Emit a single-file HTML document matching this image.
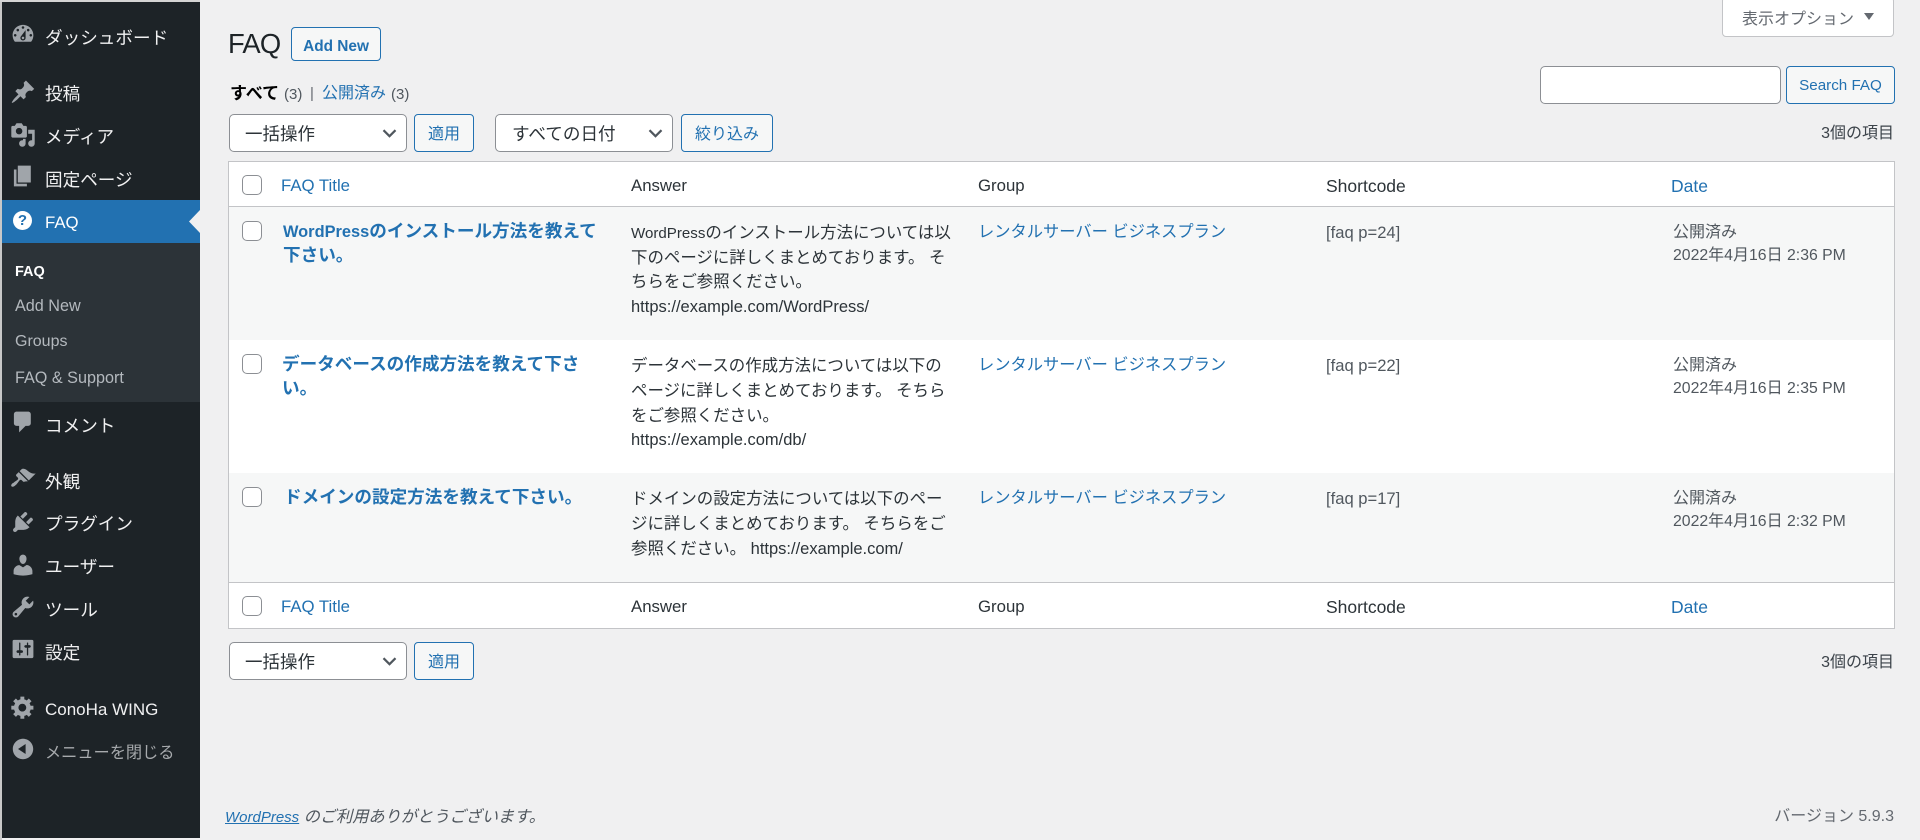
<!DOCTYPE html>
<html lang="ja"><head><meta charset="utf-8"><title>FAQ</title>
<style>
html,body{margin:0;padding:0;width:1920px;height:840px;overflow:hidden;background:#f0f0f1}
body{position:relative;font-family:"Liberation Sans","Noto Sans CJK JP",sans-serif;color:#3c434a}
.t{position:absolute;white-space:nowrap;line-height:24px;height:24px}
.m{font-size:17.6px;color:#f0f0f1;left:45px}
.s{font-size:16px;color:#b4b9be;left:15px}
svg.i{position:absolute;width:26px;height:26px;left:9.5px;fill:#a0a5aa}
.box{position:absolute;box-sizing:border-box}
.sel{background:#fff;border:1px solid #8c8f94;border-radius:5px;height:38px}
.btn{background:#f6f7f7;border:1px solid #2271b1;border-radius:4px;height:38px;color:#2271b1;font-size:16px;text-align:center;line-height:39px}
.cb{width:20px;height:20px;left:242px;background:#fff;border:1px solid #8c8f94;border-radius:5px}
.chev{position:absolute;width:15px;height:9px;fill:none;stroke:#50575e;stroke-width:2.2}
.l{color:#2271b1}
.h{font-size:16.8px;color:#2c3338}
.tt{font-size:17.6px;font-weight:bold;color:#2271b1;left:283px}
.tt i{font-style:normal;font-size:16.4px}
.a{font-size:16.45px;left:631px;color:#2c3338}
.a i{font-style:normal;font-size:16.5px}
.a i.w{font-size:15.1px}
.g{font-size:16.25px;color:#2271b1;left:978px}
.c{font-size:16.6px;color:#50575e;left:1326px}
.d{font-size:16px;color:#50575e;left:1673px}
.d i{font-style:normal;font-size:15.8px}
</style></head><body>

<div class="box" style="left:2px;top:2px;width:198px;height:836px;background:#1d2327"></div>
<div class="box" style="left:2px;top:200px;width:198px;height:43px;background:#2271b1"></div>
<div class="box" style="left:2px;top:243px;width:198px;height:159px;background:#2c3338"></div>
<div class="box" style="left:0;top:0;width:2px;height:840px;background:#c8c8c8"></div>
<div class="box" style="left:0;top:0;width:200px;height:2px;background:#d4d4d4"></div>
<svg style="position:absolute;left:189px;top:210px;width:11px;height:23px"><path d="M11 0V23L0 11.5z" fill="#f0f0f1"/></svg>

<svg class="i" style="top:21px" viewBox="0 0 20 20"><path fill-rule="evenodd" d="M3.76 16h12.48c1.1-1.37 1.76-3.11 1.76-5 0-4.42-3.58-8-8-8s-8 3.58-8 8c0 1.89.66 3.63 1.76 5zM10 4c.55 0 1 .45 1 1s-.45 1-1 1-1-.45-1-1 .45-1 1-1zM6 6c.55 0 1 .45 1 1s-.45 1-1 1-1-.45-1-1 .45-1 1-1zm8 0c.55 0 1 .45 1 1s-.45 1-1 1-1-.45-1-1 .45-1 1-1zm-5.37 5.55L12 7v6c0 1.1-.9 2-2 2s-2-.9-2-2c0-.57.24-1.08.63-1.45zM4 10c.55 0 1 .45 1 1s-.45 1-1 1-1-.45-1-1 .45-1 1-1zm12 0c.55 0 1 .45 1 1s-.45 1-1 1-1-.45-1-1 .45-1 1-1zm-5 3c0-.55-.45-1-1-1s-1 .45-1 1 .45 1 1 1 1-.45 1-1z"/></svg>
<svg class="i" style="top:78.5px" viewBox="0 0 20 20"><path d="M10.44 3.02l1.82-1.82 6.36 6.35-1.83 1.82c-1.05-.68-2.48-.57-3.41.36l-.75.75c-.92.93-1.04 2.35-.35 3.41l-1.83 1.82-2.41-2.41-2.8 2.79c-.42.42-3.38 2.71-3.8 2.29s1.86-3.39 2.28-3.81l2.79-2.79L4.1 9.36l1.83-1.82c1.05.69 2.48.57 3.4-.36l.75-.75c.93-.92 1.05-2.35.36-3.41z"/></svg>
<svg class="i" style="top:121.7px" viewBox="0 0 20 20"><path fill-rule="evenodd" d="M13 11V4c0-.55-.45-1-1-1h-1.67L9 1H5L3.67 3H2c-.55 0-1 .45-1 1v7c0 .55.45 1 1 1h10c.55 0 1-.45 1-1zM7 4.5c1.38 0 2.5 1.12 2.5 2.5S8.38 9.5 7 9.5 4.5 8.38 4.5 7 5.62 4.5 7 4.5zM14 6h5v10.5c0 1.38-1.12 2.5-2.5 2.5S14 17.88 14 16.5s1.12-2.5 2.5-2.5c.17 0 .34.02.5.05V9h-3V6zm-4 8.05V13h2v3.5c0 1.38-1.12 2.5-2.5 2.5S7 17.88 7 16.5 8.12 14 9.5 14c.17 0 .34.02.5.05z"/></svg>
<svg class="i" style="top:163.4px" viewBox="0 0 20 20"><path d="M6 15V2h10v13H6zm-1 1h8v2H3V5h2v11z"/></svg>
<div class="box" style="left:13px;top:210.5px;width:19px;height:19px;border-radius:50%;background:#fff;color:#2271b1;font-weight:bold;font-size:15px;line-height:19px;text-align:center">?</div>
<svg class="i" style="top:409.4px" viewBox="0 0 20 20"><path d="M5 2h9c1.1 0 2 .9 2 2v7c0 1.1-.9 2-2 2h-2l-5 5v-5H5c-1.1 0-2-.9-2-2V4c0-1.1.9-2 2-2z"/></svg>
<svg class="i" style="top:466px" viewBox="0 0 20 20"><path d="M14.48 11.06L7.41 3.99l1.5-1.5c.5-.56 2.3-.47 3.51.32 1.21.8 1.43 1.28 2.91 2.1 1.18.64 2.45 1.26 4.45.85zm-.71.71L6.7 4.7 4.93 6.47c-.39.39-.39 1.02 0 1.41l1.06 1.06c.39.39.39 1.03 0 1.42-.6.6-1.43 1.11-2.21 1.69-.35.26-.7.53-1.01.84C1.43 13.23.4 14.89 1.2 15.69c.8.8 2.46-.23 3.8-1.57.31-.31.58-.66.85-1.01.58-.78 1.09-1.61 1.69-2.21.39-.39 1.02-.39 1.41 0l1.06 1.06c.39.39 1.02.39 1.41 0z"/></svg>
<svg class="i" style="top:509px" viewBox="0 0 20 20"><path d="M13.11 4.36L9.87 7.6 8 5.73l3.24-3.24c.35-.34 1.05-.2 1.56.32.52.51.66 1.21.31 1.55zm-8 1.77l.91-1.12 9.01 9.01-1.19.84c-.71.71-2.63 1.16-3.82 1.16H6.14L4.9 17.26c-.59.59-1.54.59-2.12 0-.59-.58-.59-1.53 0-2.12l1.24-1.24v-3.88c0-1.13.4-3.19 1.09-3.89zm7.26 3.97l3.24-3.24c.34-.35 1.04-.21 1.55.31.52.51.66 1.21.31 1.55l-3.24 3.25z"/></svg>
<svg class="i" style="top:551.5px" viewBox="0 0 20 20"><path d="M10 9.25c-2.27 0-2.73-3.44-2.73-3.44C7 4.02 7.82 2 9.97 2c2.16 0 2.98 2.02 2.71 3.81 0 0-.41 3.44-2.68 3.44zm0 2.57L12.72 10c2.39 0 4.52 2.33 4.52 4.53v2.49s-3.65 1.13-7.24 1.13c-3.65 0-7.24-1.13-7.24-1.13v-2.49c0-2.25 1.94-4.48 4.47-4.48z"/></svg>
<svg class="i" style="top:593.5px" viewBox="0 0 20 20"><path fill-rule="evenodd" d="M16.68 9.77c-1.34 1.34-3.3 1.67-4.95.99l-5.41 6.52c-.99.99-2.59.99-3.58 0s-.99-2.59 0-3.57l6.52-5.42c-.68-1.65-.35-3.61.99-4.95 1.28-1.28 3.12-1.62 4.72-1.06l-2.89 2.89 2.82 2.82 2.86-2.87c.53 1.58.18 3.39-1.08 4.65zM3.81 16.21c.4.39 1.04.39 1.43 0 .4-.4.4-1.04 0-1.43-.39-.4-1.03-.4-1.43 0-.39.39-.39 1.03 0 1.43z"/></svg>
<svg class="i" style="top:636px" viewBox="0 0 20 20"><path fill-rule="evenodd" d="M18 16V4c0-.55-.45-1-1-1H3c-.55 0-1 .45-1 1v12c0 .55.45 1 1 1h14c.55 0 1-.45 1-1zM8 11h1c.55 0 1 .45 1 1s-.45 1-1 1H8v1.5c0 .28-.22.5-.5.5s-.5-.22-.5-.5V13H6c-.55 0-1-.45-1-1s.45-1 1-1h1V5.5c0-.28.22-.5.5-.5s.5.22.5.5V11zm5-2h-1c-.55 0-1-.45-1-1s.45-1 1-1h1V5.5c0-.28.22-.5.5-.5s.5.22.5.5V7h1c.55 0 1 .45 1 1s-.45 1-1 1h-1v5.5c0 .28-.22.5-.5.5s-.5-.22-.5-.5V9z"/></svg>
<svg class="i" style="top:693.5px" viewBox="0 0 20 20"><path fill-rule="evenodd" d="M18 12h-2.18c-.17.7-.44 1.35-.81 1.93l1.54 1.54-2.1 2.1-1.54-1.54c-.58.36-1.23.63-1.91.79V19H8v-2.18c-.68-.16-1.33-.43-1.91-.79l-1.54 1.54-2.12-2.12 1.54-1.54c-.36-.58-.63-1.23-.79-1.91H1V9.03h2.17c.16-.7.44-1.35.8-1.94L2.43 5.55l2.1-2.1 1.54 1.54c.58-.37 1.24-.64 1.93-.81V2h3v2.18c.68.16 1.33.43 1.91.79l1.54-1.54 2.12 2.12-1.54 1.54c.36.59.64 1.24.8 1.94H18V12zm-8.5 1.5c1.66 0 3-1.34 3-3s-1.34-3-3-3-3 1.34-3 3 1.34 3 3 3z"/></svg>
<svg class="i" style="top:736px" viewBox="0 0 20 20"><path fill-rule="evenodd" d="M10 2.16c4.33 0 7.84 3.51 7.84 7.84s-3.51 7.84-7.84 7.84S2.16 14.33 2.16 10 5.71 2.16 10 2.16zm2 11.72V6.12L6.18 9.97z"/></svg>

<div class="t m" style="top:26px">ダッシュボード</div>
<div class="t m" style="top:82px">投稿</div>
<div class="t m" style="top:125px">メディア</div>
<div class="t m" style="top:168px">固定ページ</div>
<div class="t m" style="top:211px;color:#fff;font-size:16.8px">FAQ</div>
<div class="t s" style="top:260px;color:#fff;font-weight:bold;font-size:14.5px">FAQ</div>
<div class="t s" style="top:294px;font-size:16.2px">Add New</div>
<div class="t s" style="top:330px">Groups</div>
<div class="t s" style="top:365.5px;font-size:16.2px">FAQ &amp; Support</div>
<div class="t m" style="top:413.5px">コメント</div>
<div class="t m" style="top:470px">外観</div>
<div class="t m" style="top:512px">プラグイン</div>
<div class="t m" style="top:555px">ユーザー</div>
<div class="t m" style="top:597.5px">ツール</div>
<div class="t m" style="top:641px">設定</div>
<div class="t m" style="top:697.5px;font-size:17px">ConoHa WING</div>
<div class="t m" style="top:740.5px;font-size:16.2px;color:#a7aaad">メニューを閉じる</div>

<div class="box" style="left:1722px;top:-3px;width:172px;height:40px;background:#fff;border:1px solid #c3c4c7;border-radius:4px"></div>
<div class="t" style="left:1742px;top:8px;font-size:16px;color:#646970">表示オプション</div>
<svg style="position:absolute;left:1864px;top:13px;width:10px;height:7px"><path d="M0 0H10L5 7z" fill="#646970"/></svg>

<div class="t" style="left:228px;top:30px;height:28px;line-height:28px;font-size:27.4px;letter-spacing:-.8px;color:#1d2327">FAQ</div>
<div class="box btn" style="left:291px;top:27px;width:90px;height:34px;line-height:37px;font-size:15.4px;font-weight:bold">Add New</div>

<div class="t" style="left:230px;top:82px;font-size:17px;color:#000;font-weight:bold">すべて</div>
<div class="t" style="left:284px;top:83px;font-size:15px;color:#50575e">(3)</div>
<div class="t" style="left:310px;top:82px;font-size:15px;color:#646970">|</div>
<div class="t l" style="left:322px;top:82px;font-size:16px">公開済み</div>
<div class="t" style="left:391px;top:83px;font-size:15px;color:#50575e">(3)</div>

<div class="box sel" style="left:1540px;top:66px;width:241px"></div>
<div class="box btn" style="left:1786px;top:66px;width:109px;font-size:15.2px;line-height:38px">Search FAQ</div>

<div class="box sel" style="left:229px;top:114px;width:178px"></div>
<div class="t" style="left:245px;top:121.5px;font-size:17.5px;color:#2c3338">一括操作</div>
<svg class="chev" style="left:382px;top:129px" viewBox="0 0 15 9"><path d="M1.5 1.2L7.5 7.2L13.5 1.2"/></svg>
<div class="box btn" style="left:414px;top:114px;width:60px">適用</div>
<div class="box sel" style="left:495px;top:114px;width:178px"></div>
<div class="t" style="left:512px;top:121.5px;font-size:17.6px;color:#2c3338">すべての日付</div>
<svg class="chev" style="left:648px;top:129px" viewBox="0 0 15 9"><path d="M1.5 1.2L7.5 7.2L13.5 1.2"/></svg>
<div class="box btn" style="left:681px;top:114px;width:92px">絞り込み</div>
<div class="t" style="right:26px;top:122px;font-size:16px;color:#3c434a">3個の項目</div>

<!-- table -->
<div class="box" style="left:228px;top:161px;width:1667px;height:468px;background:#fff;border:1px solid #c3c4c7"></div>
<div class="box" style="left:229px;top:206px;width:1665px;height:1px;background:#c3c4c7"></div>
<div class="box" style="left:229px;top:207px;width:1665px;height:133px;background:#f6f7f7"></div>
<div class="box" style="left:229px;top:473px;width:1665px;height:109px;background:#f6f7f7"></div>
<div class="box" style="left:229px;top:582px;width:1665px;height:1px;background:#c3c4c7"></div>

<div class="box cb" style="top:175px"></div>
<div class="t h l" style="left:281px;top:174px;color:#2271b1">FAQ Title</div>
<div class="t h" style="left:631px;top:174px">Answer</div>
<div class="t h" style="left:978px;top:174px">Group</div>
<div class="t h" style="left:1326px;top:174px;font-size:17.5px">Shortcode</div>
<div class="t h" style="left:1671px;top:174px;color:#2271b1;font-size:17.5px">Date</div>

<div class="box cb" style="top:221px"></div>
<div class="t tt" style="top:219px"><i>WordPress</i>のインストール方法を教えて</div>
<div class="t tt" style="top:243px">下さい。</div>
<div class="t a" style="top:221px"><i class="w">WordPress</i>のインストール方法については以</div>
<div class="t a" style="top:245.5px">下のページに詳しくまとめております。 そ</div>
<div class="t a" style="top:270px">ちらをご参照ください。</div>
<div class="t a" style="top:295px"><i>https://example.com/WordPress/</i></div>
<div class="t g" style="top:220px">レンタルサーバー ビジネスプラン</div>
<div class="t c" style="top:221px">[faq p=24]</div>
<div class="t d" style="top:220.5px">公開済み</div>
<div class="t d" style="top:244px"><i>2022</i>年<i>4</i>月<i>16</i>日 <i>2:36 PM</i></div>

<div class="box cb" style="top:354px"></div>
<div class="t tt" style="top:351.5px;left:282px">データベースの作成方法を教えて下さ</div>
<div class="t tt" style="top:375.5px;left:282px">い。</div>
<div class="t a" style="top:354px">データベースの作成方法については以下の</div>
<div class="t a" style="top:378.5px">ページに詳しくまとめております。 そちら</div>
<div class="t a" style="top:403.5px">をご参照ください。</div>
<div class="t a" style="top:428px"><i>https://example.com/db/</i></div>
<div class="t g" style="top:353px">レンタルサーバー ビジネスプラン</div>
<div class="t c" style="top:354px">[faq p=22]</div>
<div class="t d" style="top:353.5px">公開済み</div>
<div class="t d" style="top:377px"><i>2022</i>年<i>4</i>月<i>16</i>日 <i>2:35 PM</i></div>

<div class="box cb" style="top:487px"></div>
<div class="t tt" style="top:485px;left:284px">ドメインの設定方法を教えて下さい。</div>
<div class="t a" style="top:487px">ドメインの設定方法については以下のペー</div>
<div class="t a" style="top:511.5px">ジに詳しくまとめております。 そちらをご</div>
<div class="t a" style="top:536.5px">参照ください。 <i>https://example.com/</i></div>
<div class="t g" style="top:486px">レンタルサーバー ビジネスプラン</div>
<div class="t c" style="top:487px">[faq p=17]</div>
<div class="t d" style="top:486.5px">公開済み</div>
<div class="t d" style="top:510px"><i>2022</i>年<i>4</i>月<i>16</i>日 <i>2:32 PM</i></div>

<div class="box cb" style="top:596px"></div>
<div class="t h" style="left:281px;top:595px;color:#2271b1">FAQ Title</div>
<div class="t h" style="left:631px;top:595px">Answer</div>
<div class="t h" style="left:978px;top:595px">Group</div>
<div class="t h" style="left:1326px;top:595px;font-size:17.5px">Shortcode</div>
<div class="t h" style="left:1671px;top:595px;color:#2271b1;font-size:17.5px">Date</div>

<div class="box sel" style="left:229px;top:642px;width:178px"></div>
<div class="t" style="left:245px;top:649.5px;font-size:17.5px;color:#2c3338">一括操作</div>
<svg class="chev" style="left:382px;top:657px" viewBox="0 0 15 9"><path d="M1.5 1.2L7.5 7.2L13.5 1.2"/></svg>
<div class="box btn" style="left:414px;top:642px;width:60px">適用</div>
<div class="t" style="right:26px;top:650.5px;font-size:16px;color:#3c434a">3個の項目</div>

<div class="t" style="left:225px;top:805px;font-size:16.2px;font-style:italic;color:#50575e"><span style="color:#2271b1;text-decoration:underline;font-size:15px">WordPress</span> のご利用ありがとうございます。</div>
<div class="t" style="right:26px;top:805px;font-size:16px;color:#646970">バージョン 5.9.3</div>

</body></html>
